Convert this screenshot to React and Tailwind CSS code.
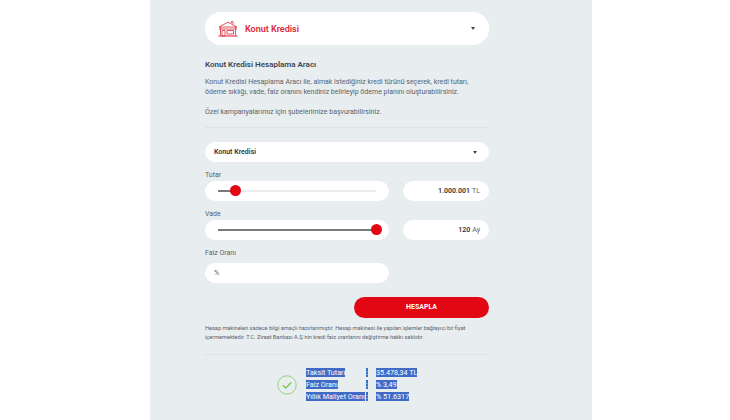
const fontStack = { fontFamily: "Roboto, 'Noto Sans', sans-serif" };

function HouseIcon() {
  return (
    <svg width="20" height="16" viewBox="0 0 20 16" fill="none" stroke="#e2404f" strokeWidth="0.9">
      <path d="M1 6 L10 1.2 L19 6 Z" />
      <path d="M13.5 2 V0.6 H15 V3" />
      <path d="M2.5 6 V14.5 M17.5 6 V14.5 M1 8 H19" />
      <path d="M0.5 15 H19.5" strokeWidth="1.2" />
      <path d="M4 9.5 H7 V15 H4 Z" />
      <path d="M9 9.5 H15.5 V13 H9 Z" />
    </svg>
  );
}

function Caret() {
  return <span className="block h-0 w-0 border-x-[2.5px] border-t-[3px] border-x-transparent border-t-[#3c4650]" />;
}

function SliderRow({ percent, value, unit }) {
  return (
    <div className="flex justify-between">
      <div className="flex h-5 w-[184px] items-center rounded-full bg-white px-[13px]">
        <div className="relative h-[1.5px] w-full bg-[#e9ecee]">
          <div className="h-full bg-[#77797b]" style={{ width: `${percent}%` }} />
          <div
            className="absolute top-[-5px] ml-[-5px] h-[11px] w-[11px] rounded-full bg-[#e30613]"
            style={{ left: `${percent}%` }}
          />
        </div>
      </div>
      <div className="flex h-5 w-[86px] items-center justify-end gap-[2px] rounded-full bg-white pr-[9px] text-[7px]">
        <span className="font-semibold text-[#2f3740]">{value}</span>
        <span className="text-[#59636d]">{unit}</span>
      </div>
    </div>
  );
}

function ResultRow({ label, value }) {
  return (
    <div className="flex h-3 items-center text-[7.2px] leading-[10px] text-white">
      <span className="w-[60px] whitespace-nowrap"><span className="bg-[#3f6bc7]">{label}</span></span>
      <span className="w-[10px]"><span className="bg-[#3f6bc7]">:</span></span>
      <span className="whitespace-nowrap"><span className="bg-[#3f6bc7]">{value}</span></span>
    </div>
  );
}

export default function App() {
  return (
    <div className="h-[420px] w-[730px] overflow-hidden bg-white pl-[150px] text-[#3c4650]" style={fontStack}>
      <div className="h-full w-[442px] bg-[#e8edf0] pl-[55px] pr-[103px] pt-3">
        <div className="flex h-[33px] items-center rounded-[16px] bg-white pl-[13px] pr-[14px]">
          <HouseIcon />
          <span className="ml-[7px] mt-[2px] text-[9px] font-semibold text-[#d9293a]">Konut Kredisi</span>
          <span className="ml-auto"><Caret /></span>
        </div>

        <h2 className="mt-[15px] text-[8px] font-semibold leading-[10px] text-[#3c4650]">Konut Kredisi Hesaplama Aracı</h2>
        <p className="mt-[7px] whitespace-nowrap text-[7px] leading-[10px] text-[#59636d]">
          Konut Kredisi Hesaplama Aracı ile, almak istediğiniz kredi türünü seçerek, kredi tutarı,
          <br />
          ödeme sıklığı, vade, faiz oranını kendiniz belirleyip ödeme planını oluşturabilirsiniz.
        </p>
        <p className="mt-[10px] text-[7px] leading-[10px] text-[#59636d]">Özel kampanyalarımız için şubelerimize başvurabilirsiniz.</p>
        <hr className="mt-[10px] border-[#dde2e5]" />

        <div className="mt-[14px] flex h-5 items-center justify-between rounded-full bg-white pl-[9px] pr-[12px]">
          <span className="text-[7px] font-semibold text-[#2f3740]">Konut Kredisi</span>
          <Caret />
        </div>

        <label className="mt-[8px] block text-[7px] leading-[10px] text-[#59636d]">Tutar</label>
        <div className="mt-[1px]"><SliderRow percent={11} value="1.000.001" unit="TL" /></div>

        <label className="mt-[8px] block text-[7px] leading-[10px] text-[#59636d]">Vade</label>
        <div className="mt-[1px]"><SliderRow percent={100} value="120" unit="Ay" /></div>

        <label className="mt-[8px] block text-[7px] leading-[10px] text-[#59636d]">Faiz Oranı</label>
        <div className="mt-[5px] flex h-5 w-[184px] items-center rounded-full bg-white pl-[9px] text-[7px] text-[#59636d]">%</div>

        <div className="mt-[14px] flex justify-end">
          <button className="h-[21px] w-[135px] rounded-full bg-[#e30613] text-[7px] font-bold text-white">HESAPLA</button>
        </div>

        <p className="mt-[6px] whitespace-nowrap text-[5.6px] leading-[9px] text-[#59636d]">
          Hesap makineleri sadece bilgi amaçlı hazırlanmıştır. Hesap makinesi ile yapılan işlemler bağlayıcı bir fiyat
          <br />
          içermemektedir. T.C. Ziraat Bankası A.Ş.'nin kredi faiz oranlarını değiştirme hakkı saklıdır.
        </p>
        <hr className="mt-[12px] border-[#dde2e5]" />

        <div className="mt-[12px] flex items-center pl-[72px]">
          <svg width="20" height="20" viewBox="0 0 20 20" fill="none">
            <circle cx="10" cy="10" r="9.2" stroke="#8ccf6a" strokeWidth="0.9" />
            <path d="M5.8 10.2 L8.8 13 L14.2 7.4" stroke="#7cc656" strokeWidth="1.4" />
          </svg>
          <div className="ml-[9px]">
            <ResultRow label="Taksit Tutarı" value="35.478,34 TL" />
            <ResultRow label="Faiz Oranı" value="% 3,49" />
            <ResultRow label="Yıllık Maliyet Oranı" value="% 51.6317" />
          </div>
        </div>
      </div>
    </div>
  );
}
